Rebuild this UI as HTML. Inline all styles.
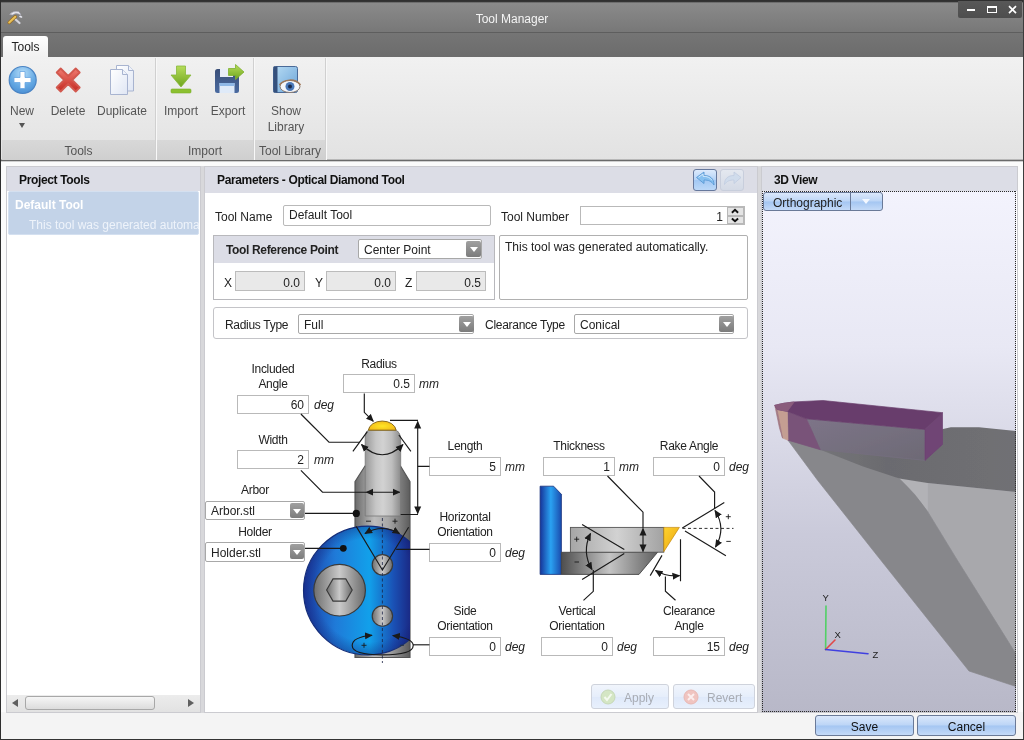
<!DOCTYPE html>
<html><head><meta charset="utf-8">
<style>
*{box-sizing:border-box;margin:0;padding:0}
html,body{width:1024px;height:740px;overflow:hidden}
body{font-family:"Liberation Sans",sans-serif;font-size:12px;color:#111;background:#f1f1f1;position:relative}
.abs{position:absolute}
#titlebar{left:0;top:0;width:1024px;height:33px;background:linear-gradient(#2e2e2e 0,#343434 1.500px,#8a8a8a 3px,#787878 31.500px,#5e5e5e 32.500px,#666 33px)}
#title{left:0;top:12px;width:1024px;text-align:center;color:#f4f4f4;font-size:12px}
#tabstrip{left:0;top:33px;width:1024px;height:24px;background:linear-gradient(#757575,#6c6c6c)}
#tab{left:3px;top:36px;width:45px;height:22px;background:linear-gradient(#fff,#f0f0f0);border-radius:3px 3px 0 0;text-align:center;font-size:12px;line-height:22px;color:#222}
#ribbon{left:0;top:57px;width:1024px;height:103px;background:linear-gradient(#f1f1f1,#e2e2e2)}
#ribbonline{left:0;top:159px;width:1024px;height:3px;background:linear-gradient(#b8b8b8 0,#b8b8b8 1px,#6a6a6a 1px,#6a6a6a 2px,#cfcfcf 2px)}
.grpfoot{top:140px;height:20px;background:linear-gradient(#d8d8d8,#cfcfcf);text-align:center;font-size:12px;line-height:22px;color:#555}
.rlabel{font-size:12px;color:#555;text-align:center}
.sep{top:58px;width:1px;height:102px;background:#d0d0d0}
#main{left:0;top:162px;width:1024px;height:576px;background:#f4f4f4}
.panel{background:#fff;border:1px solid #cbcbd0}
.phead{background:#dcdde6;font-weight:bold;letter-spacing:-0.35px;font-size:12px;line-height:26px;height:24px;padding-left:12px;overflow:hidden;color:#111}
.inp{background:#fff;border:1px solid #b9b9b9;height:20px;font-size:12px;line-height:18px;padding-top:1.500px;overflow:hidden;text-align:right;padding-right:4px;color:#222}
.lbl{font-size:12px;color:#222;white-space:nowrap;margin-top:1px}
.unit{font-size:12px;font-style:italic;color:#222;margin-top:0}
.c{text-align:center;letter-spacing:-0.3px}

.ro{background:#e9e9e9;border-color:#bcbcbc}
.combo{border-radius:2px;border-color:#a8a8a8;padding-top:0.700px}
.dd{width:15px;height:16px;background:linear-gradient(#a0a0a0,#7c7c7c);border-radius:2px}
.dd:after{content:"";position:absolute;left:50%;top:50%;margin:-2px 0 0 -4px;border-left:4px solid transparent;border-right:4px solid transparent;border-top:5px solid #fff}
.btn{border:1px solid #6a7a98;border-radius:3px;background:linear-gradient(#dbe8fb,#bcd5f6 48%,#a4c6f2 52%,#c4daf8);text-align:center;font-size:12px;line-height:22.500px;color:#111;overflow:hidden}
.btnd{border:1px solid #cfd3dc;border-radius:3px;background:linear-gradient(#f1f5fc,#e6eefb 50%,#dfe9fa 52%,#e8f0fc)}
#wrap{position:absolute;left:0;top:0;width:1024px;height:740px;will-change:transform}
</style></head><body><div id="wrap">
<div class="abs" id="titlebar"></div>
<div class="abs" id="title">Tool Manager</div>
<div class="abs" id="tabstrip"></div>
<div class="abs" id="tab">Tools</div>
<div class="abs" id="ribbon"></div>
<div class="abs" id="ribbonline"></div>
<div class="abs" id="main"></div>
<svg class="abs" style="left:5px;top:7px" width="20" height="20" viewBox="5 7 20 20">
<path d="M9.500 14.500Q13 10.500 18.500 11.500Q20.500 13 21 15.500L18.500 14Q15.500 12.500 12.500 15z" fill="#e6e6ee" stroke="#9a9aa6" stroke-width="0.600"/>
<path d="M14.500 18.500L19.500 23" stroke="#d4d4dc" stroke-width="2.200" stroke-linecap="round"/>
<path d="M20 16.500l1.500 0.500" stroke="#e8e8f0" stroke-width="1.600" stroke-linecap="round"/>
<path d="M9.200 22.500L15.300 16.800" stroke="#9a6a20" stroke-width="3.400" stroke-linecap="round"/>
<path d="M9.200 22.500L15.300 16.800" stroke="#e8c25a" stroke-width="2" stroke-linecap="round"/>
</svg>
<!--RIBBON-S-->
<div class="abs grpfoot" style="left:2px;width:153px">Tools</div>
<div class="abs grpfoot" style="left:157px;width:96px">Import</div>
<div class="abs grpfoot" style="left:255px;width:70px">Tool Library</div>
<div class="abs sep" style="left:155px"></div><div class="abs" style="left:156px;top:58px;width:1px;height:102px;background:#f8f8f8"></div>
<div class="abs sep" style="left:253px"></div><div class="abs" style="left:254px;top:58px;width:1px;height:102px;background:#f8f8f8"></div>
<div class="abs sep" style="left:325px"></div><div class="abs" style="left:326px;top:58px;width:1px;height:102px;background:#f8f8f8"></div>
<div class="abs rlabel" style="left:2px;top:104px;width:40px">New</div>
<div class="abs" style="left:19px;top:123px;width:0;height:0;border-left:3.5px solid transparent;border-right:3.5px solid transparent;border-top:5px solid #555"></div>
<div class="abs rlabel" style="left:43px;top:104px;width:50px">Delete</div>
<div class="abs rlabel" style="left:92px;top:104px;width:60px">Duplicate</div>
<div class="abs rlabel" style="left:156px;top:104px;width:50px">Import</div>
<div class="abs rlabel" style="left:203px;top:104px;width:50px">Export</div>
<div class="abs rlabel" style="left:256px;top:102.500px;width:60px;line-height:16.300px">Show<br>Library</div>
<svg class="abs" style="left:0;top:57px" width="330" height="50" viewBox="0 57 330 50">
<defs>
<radialGradient id="gNew" cx="0.5" cy="0.25" r="0.85"><stop offset="0" stop-color="#b4dcf8"/><stop offset="0.55" stop-color="#66aae4"/><stop offset="1" stop-color="#4488d0"/></radialGradient>
<linearGradient id="gRed" x1="0" y1="0" x2="0" y2="1"><stop offset="0" stop-color="#f07a70"/><stop offset="1" stop-color="#c42a22"/></linearGradient>
<linearGradient id="gGreen" x1="0" y1="0" x2="0" y2="1"><stop offset="0" stop-color="#b6dc5a"/><stop offset="1" stop-color="#6ea51e"/></linearGradient>
<linearGradient id="gPage" x1="0" y1="0" x2="1" y2="1"><stop offset="0" stop-color="#ffffff"/><stop offset="1" stop-color="#dfe6f4"/></linearGradient>
<linearGradient id="gFloppy" x1="0" y1="0" x2="0" y2="1"><stop offset="0" stop-color="#3a4f78"/><stop offset="1" stop-color="#4a6aa0"/></linearGradient>
<linearGradient id="gBook" x1="0" y1="0" x2="1" y2="1"><stop offset="0" stop-color="#b8dcf4"/><stop offset="1" stop-color="#6aa4d8"/></linearGradient>
</defs>
<!-- New -->
<circle cx="22.700" cy="80" r="13.500" fill="url(#gNew)" stroke="#4a84c4" stroke-width="1.200"/>
<path d="M20 71.5h5v6h6v5h-6v6h-5v-6h-6v-5h6z" fill="#fff" stroke="#6aa6e2" stroke-width="0.8"/>
<!-- Delete -->
<path d="M56.700 72.500l4-4 7.500 7.500 7.500-7.500 4 4-7.500 7.500 7.500 7.500-4 4-7.500-7.500-7.500 7.500-4-4 7.500-7.500z" fill="url(#gRed)" stroke="#d2584e" stroke-width="1.800" stroke-linejoin="round"/>
<!-- Duplicate -->
<path d="M116.500 65.500h12l5 5v20.500h-17z" fill="url(#gPage)" stroke="#a8b4d0" stroke-width="1"/>
<path d="M128.500 65.500v5h5" fill="#eef2fa" stroke="#a8b4d0" stroke-width="1"/>
<path d="M110.500 69.500h12l5 5v20h-17z" fill="url(#gPage)" stroke="#a8b4d0" stroke-width="1"/>
<path d="M122.500 69.500v5h5" fill="#eef2fa" stroke="#a8b4d0" stroke-width="1"/>
<!-- Import -->
<path d="M176.500 66h9v9h5.500l-10 12-10-12h5.500z" fill="url(#gGreen)" stroke="#86b83a" stroke-width="0.8"/>
<rect x="171" y="89" width="20" height="4" rx="1" fill="#8cc030" stroke="#7aae2a" stroke-width="0.6"/>
<!-- Export -->
<rect x="215" y="69" width="24" height="24" rx="2.500" fill="url(#gFloppy)"/>
<rect x="220" y="69" width="13" height="8" fill="#e8eef8"/>
<rect x="219.500" y="83" width="15" height="10" fill="#dfeaf8"/>
<rect x="219.500" y="83" width="15" height="3" fill="#8fb8e6"/>
<path d="M228.500 68.500h7v-4l8.500 7.500-8.500 7.500v-4h-7z" fill="url(#gGreen)" stroke="#7fb030" stroke-width="0.8"/>
<!-- Book -->
<rect x="273.500" y="66.500" width="24" height="26" rx="2" fill="url(#gBook)" stroke="#4a6a98" stroke-width="1"/>
<rect x="273.500" y="66.500" width="4" height="26" fill="#35507c"/>
<ellipse cx="290" cy="86.500" rx="10" ry="6" fill="#f4f6fa" stroke="#8a7a70" stroke-width="1"/>
<circle cx="290" cy="86.500" r="4.500" fill="#4a78b8"/>
<circle cx="290" cy="86.500" r="2" fill="#1a2a4a"/>
<path d="M279.500 85c4-6 16-7 21 0" fill="none" stroke="#a07858" stroke-width="1.500"/>
</svg>
<!--RIBBON-E-->
<!--LEFT-S-->
<div class="abs" style="left:1px;top:162px;width:1022px;height:550px;background:#fbfbfb"></div>
<div class="abs" style="left:0;top:713px;width:1024px;height:27px;background:#f4f4f4"></div>
<div class="abs" style="left:200px;top:166px;width:5px;height:547px;background:#d8d8db"></div><div class="abs" style="left:757px;top:166px;width:5px;height:547px;background:#d8d8db"></div><div class="abs panel" style="left:6px;top:166px;width:195px;height:547px"></div>
<div class="abs phead" style="left:7px;top:167px;width:193px">Project Tools</div>
<div class="abs" style="left:8px;top:191px;width:191px;height:44px;background:#c3d3e8;border:1px solid #d4e0f0;border-radius:2px"></div>
<div class="abs" style="left:15px;top:198px;font-weight:bold;letter-spacing:0;color:#fff;font-size:12px">Default Tool</div>
<div class="abs" style="left:29px;top:218px;width:170px;overflow:hidden;white-space:nowrap;color:#eef3fa;font-size:12px">This tool was generated automatically.</div>
<div class="abs" style="left:7px;top:695px;width:193px;height:17px;background:linear-gradient(#ececec,#e2e2e2)"></div>
<div class="abs" style="left:25px;top:696px;width:130px;height:14px;border:1px solid #a8a8a8;border-radius:3px;background:linear-gradient(#f6f6f6,#dcdcdc)"></div>
<div class="abs" style="left:12px;top:699px;width:0;height:0;border-top:4px solid transparent;border-bottom:4px solid transparent;border-right:6px solid #606060"></div>
<div class="abs" style="left:188px;top:699px;width:0;height:0;border-top:4px solid transparent;border-bottom:4px solid transparent;border-left:6px solid #606060"></div>
<!--LEFT-E-->
<!--CENTER-S-->
<div class="abs panel" style="left:204px;top:166px;width:554px;height:547px"></div>
<div class="abs phead" style="left:205px;top:167px;width:552px;height:25.500px">Parameters - Optical Diamond Tool</div>
<!-- undo/redo -->
<div class="abs" style="left:693px;top:168.500px;width:24px;height:22px;border:1px solid #66789c;border-radius:3px;background:linear-gradient(#dceafc,#b4d2f6 50%,#a2c8f4 51%,#bcd8f8)"></div>
<div class="abs" style="left:719.500px;top:168.500px;width:24px;height:22px;border:1px solid #c8cedc;border-radius:3px;background:linear-gradient(#e4e8f0,#d4dae6)"></div>
<svg class="abs" style="left:693px;top:168px" width="52" height="22" viewBox="0 0 52 22">
<path d="M3.500 9.500l7.500-5.500v3.500c6 0 10 3 10 9.500-2.500-4-5.500-5-10-5v3.500z" fill="#86c0f0" stroke="#5a98d4" stroke-width="0.900"/><path d="M5.500 9.300l4.500-3.300v2.300c4 0 7 1 9 4" fill="none" stroke="#d8ecfc" stroke-width="0.900"/>
<path d="M48 9.500l-7-5.500v3.500c-6 0-9.500 3-9.500 9 2.500-3.500 5-4.500 9.500-4.500v3.500z" fill="#d0dcec" stroke="#c0cce0" stroke-width="0.800"/>
</svg>
<!-- row 1 -->
<div class="abs lbl" style="left:215px;top:209px">Tool Name</div>
<div class="abs inp" style="left:283px;top:205px;width:208px;height:21px;text-align:left;padding-left:5px;border-radius:2px;line-height:19px;line-height:17px;padding-top:1px">Default Tool</div>
<div class="abs lbl" style="left:501px;top:209px">Tool Number</div>
<div class="abs inp" style="left:580px;top:206px;width:165px;height:19px;padding-right:21px;line-height:17px">1</div>
<div class="abs" style="left:727px;top:207px;width:17px;height:9px;background:#e4e4e4;border:1px solid #b8b8b8"></div>
<div class="abs" style="left:727px;top:216px;width:17px;height:8px;background:#e4e4e4;border:1px solid #b8b8b8"></div>
<svg class="abs" style="left:727px;top:206px" width="18" height="19" viewBox="0 0 18 19"><path d="M4.900 6.700L8 3.900L11.100 6.700M4.900 12.500L8 15.300L11.100 12.500" fill="none" stroke="#111" stroke-width="1.900" stroke-linejoin="miter"/></svg>
<!-- ref point box -->
<div class="abs" style="left:213px;top:235px;width:282px;height:65px;border:1px solid #b8b8bc;background:#fff"></div>
<div class="abs" style="left:214px;top:236px;width:280px;height:27px;background:#dcdde6"></div>
<div class="abs lbl" style="left:226px;top:242px;font-weight:bold;letter-spacing:-0.35px">Tool Reference Point</div>
<div class="abs inp combo" style="left:358px;top:239px;width:124px;height:20px;text-align:left;padding-left:5px">Center Point</div>
<div class="abs dd" style="left:466px;top:241px"></div>
<div class="abs lbl" style="left:224px;top:275px">X</div>
<div class="abs inp ro" style="left:235px;top:271px;width:70px">0.0</div>
<div class="abs lbl" style="left:315px;top:275px">Y</div>
<div class="abs inp ro" style="left:326px;top:271px;width:70px">0.0</div>
<div class="abs lbl" style="left:405px;top:275px">Z</div>
<div class="abs inp ro" style="left:416px;top:271px;width:70px">0.5</div>
<!-- description -->
<div class="abs" style="left:499px;top:235px;width:249px;height:65px;border:1px solid #b0b0b0;border-radius:2px;background:#fff"></div>
<div class="abs lbl" style="left:505px;top:239px">This tool was generated automatically.</div>
<!-- radius type -->
<div class="abs" style="left:213px;top:307px;width:535px;height:32px;border:1px solid #c4c4c8;border-radius:3px;background:#fff"></div>
<div class="abs lbl" style="left:225px;top:317px;letter-spacing:-0.3px">Radius Type</div>
<div class="abs inp combo" style="left:298px;top:314px;width:176px;height:20px;text-align:left;padding-left:5px">Full</div>
<div class="abs dd" style="left:459px;top:316px"></div>
<div class="abs lbl" style="left:485px;top:317px;letter-spacing:-0.28px">Clearance Type</div>
<div class="abs inp combo" style="left:574px;top:314px;width:160px;height:20px;text-align:left;padding-left:5px">Conical</div>
<div class="abs dd" style="left:719px;top:316px"></div>
<!-- diagram fields -->
<div class="abs lbl c" style="left:233px;top:361px;width:80px;line-height:15px">Included<br>Angle</div>
<div class="abs inp" style="left:237px;top:395px;width:72px;height:19px;line-height:17px;padding-top:1px">60</div><div class="abs unit" style="left:314px;top:398px">deg</div>
<div class="abs lbl c" style="left:339px;top:356px;width:80px">Radius</div>
<div class="abs inp" style="left:343px;top:374px;width:72px;height:19px;line-height:17px;padding-top:1px">0.5</div><div class="abs unit" style="left:419px;top:377px">mm</div>
<div class="abs lbl c" style="left:233px;top:432px;width:80px">Width</div>
<div class="abs inp" style="left:237px;top:450px;width:72px;height:19px;line-height:17px;padding-top:1px">2</div><div class="abs unit" style="left:314px;top:453px">mm</div>
<div class="abs lbl c" style="left:215px;top:482px;width:80px">Arbor</div>
<div class="abs inp combo" style="left:205px;top:500.500px;width:100px;height:19.500px;text-align:left;padding-left:5px">Arbor.stl</div>
<div class="abs dd" style="left:290px;top:503px;width:14px;height:15px"></div>
<div class="abs lbl c" style="left:215px;top:524px;width:80px">Holder</div>
<div class="abs inp combo" style="left:205px;top:542px;width:100px;height:20px;text-align:left;padding-left:5px">Holder.stl</div>
<div class="abs dd" style="left:290px;top:544px;width:14px;height:15px"></div>
<div class="abs lbl c" style="left:425px;top:438px;width:80px">Length</div>
<div class="abs inp" style="left:429px;top:457px;width:72px;height:19px;line-height:17px;padding-top:1px">5</div><div class="abs unit" style="left:505px;top:460px">mm</div>
<div class="abs lbl c" style="left:425px;top:509px;width:80px;line-height:15px">Horizontal<br>Orientation</div>
<div class="abs inp" style="left:429px;top:543px;width:72px;height:19px;line-height:17px;padding-top:1px">0</div><div class="abs unit" style="left:505px;top:546px">deg</div>
<div class="abs lbl c" style="left:425px;top:603px;width:80px;line-height:15px">Side<br>Orientation</div>
<div class="abs inp" style="left:429px;top:637px;width:72px;height:19px;line-height:17px;padding-top:1px">0</div><div class="abs unit" style="left:505px;top:640px">deg</div>
<div class="abs lbl c" style="left:539px;top:438px;width:80px">Thickness</div>
<div class="abs inp" style="left:543px;top:457px;width:72px;height:19px;line-height:17px;padding-top:1px">1</div><div class="abs unit" style="left:619px;top:460px">mm</div>
<div class="abs lbl c" style="left:649px;top:438px;width:80px">Rake Angle</div>
<div class="abs inp" style="left:653px;top:457px;width:72px;height:19px;line-height:17px;padding-top:1px">0</div><div class="abs unit" style="left:729px;top:460px">deg</div>
<div class="abs lbl c" style="left:537px;top:603px;width:80px;line-height:15px">Vertical<br>Orientation</div>
<div class="abs inp" style="left:541px;top:637px;width:72px;height:19px;line-height:17px;padding-top:1px">0</div><div class="abs unit" style="left:617px;top:640px">deg</div>
<div class="abs lbl c" style="left:649px;top:603px;width:80px;line-height:15px">Clearance<br>Angle</div>
<div class="abs inp" style="left:653px;top:637px;width:72px;height:19px;line-height:17px;padding-top:1px">15</div><div class="abs unit" style="left:729px;top:640px">deg</div>
<!--DIAG-S-->
<svg class="abs" style="left:204px;top:340px" width="553" height="340" viewBox="204 340 553 340">
<defs>
<linearGradient id="gArbor" x1="0" y1="0" x2="1" y2="0"><stop offset="0" stop-color="#6a6a6a"/><stop offset="0.35" stop-color="#bdbdbd"/><stop offset="0.6" stop-color="#a8a8a8"/><stop offset="1" stop-color="#5c5c5c"/></linearGradient>
<linearGradient id="gShank" x1="0" y1="0" x2="1" y2="0"><stop offset="0" stop-color="#989898"/><stop offset="0.3" stop-color="#c6c6c6"/><stop offset="0.5" stop-color="#d2d2d2"/><stop offset="0.75" stop-color="#bebebe"/><stop offset="1" stop-color="#8a8a8a"/></linearGradient>
<linearGradient id="gBlue" gradientUnits="userSpaceOnUse" x1="303" y1="0" x2="410" y2="0"><stop offset="0" stop-color="#1c3aa0"/><stop offset="0.3" stop-color="#1f7ad8"/><stop offset="0.62" stop-color="#12a0ea"/><stop offset="0.85" stop-color="#1a50b4"/><stop offset="1" stop-color="#1a2a86"/></linearGradient>
<linearGradient id="gBolt" x1="0" y1="0" x2="1" y2="0"><stop offset="0" stop-color="#6e6e6e"/><stop offset="0.5" stop-color="#c9c9c9"/><stop offset="1" stop-color="#6a6a6a"/></linearGradient>
<linearGradient id="gBlue2" x1="0" y1="0" x2="1" y2="0"><stop offset="0" stop-color="#16349a"/><stop offset="0.5" stop-color="#2aa2f2"/><stop offset="1" stop-color="#1a4cae"/></linearGradient>
<linearGradient id="gUp" x1="0" y1="0" x2="1" y2="0"><stop offset="0" stop-color="#a6a6a6"/><stop offset="0.5" stop-color="#d2d2d2"/><stop offset="1" stop-color="#a2a2a2"/></linearGradient>
<linearGradient id="gLow" x1="0" y1="0" x2="1" y2="0"><stop offset="0" stop-color="#4e4e4e"/><stop offset="0.5" stop-color="#c4c4c4"/><stop offset="1" stop-color="#606060"/></linearGradient>
<linearGradient id="gYel" x1="0" y1="0" x2="1" y2="1"><stop offset="0" stop-color="#ffd22e"/><stop offset="1" stop-color="#e8a410"/></linearGradient>
<marker id="ah" viewBox="0 0 10 10" refX="9" refY="5" markerWidth="7.800" markerHeight="7.800" orient="auto-start-reverse" markerUnits="userSpaceOnUse"><path d="M0 0.500L10 5L0 9.500z" fill="#1a1a1a"/></marker>
</defs>
<g stroke="#1a1a1a" stroke-width="1.150" fill="none">
<!-- arbor -->
<path d="M355 657.500V481.700L365 466H400.500L410 481.700V657.500z" fill="url(#gArbor)" stroke="#555"/>
<!-- shank -->
<path d="M365.200 516V437Q365.500 432 368.200 430.200H396.300Q399.500 432 400.700 437V516z" fill="url(#gShank)" stroke="#777" stroke-width="0.800"/>
<!-- tip -->
<radialGradient id="gTip" cx="0.5" cy="0.55" r="0.6"><stop offset="0" stop-color="#ffe626"/><stop offset="1" stop-color="#f2b618"/></radialGradient><path d="M368.400 430.200A13.900 10 0 0 1 396.100 430.200z" fill="url(#gTip)" stroke="#7a5c14" stroke-width="0.900"/>
<!-- blue holder -->
<clipPath id="cpH"><rect x="300" y="520" width="110" height="140"/></clipPath>
<circle cx="367.900" cy="590.500" r="64.400" fill="url(#gBlue)" stroke="#16307a" clip-path="url(#cpH)"/>
<radialGradient id="gRim" gradientUnits="userSpaceOnUse" cx="367.900" cy="590.500" r="64.400"><stop offset="0.800" stop-color="#101a6e" stop-opacity="0"/><stop offset="1" stop-color="#101a6e" stop-opacity="0.350"/></radialGradient><circle cx="367.900" cy="590.500" r="64.400" fill="url(#gRim)" stroke="none" clip-path="url(#cpH)"/><circle cx="339.600" cy="590.200" r="25.800" fill="url(#gBolt)" stroke="#3a3a3a"/>
<path d="M326.600 590l6.400-11.100h12.800l6.400 11.100-6.400 11.100h-12.800z" fill="url(#gBolt)" stroke="#3a3a3a"/>
<circle cx="382.400" cy="564.800" r="10.200" fill="url(#gBolt)" stroke="#3a3a3a"/>
<circle cx="382.400" cy="616" r="10.200" fill="url(#gBolt)" stroke="#3a3a3a"/>
<!-- centerline -->
<path d="M382.400 518V663" stroke-dasharray="3 2.500" stroke-width="0.800" stroke="#1a2244"/>
<!-- V -->
<path d="M356.200 526.400L382.400 570L408.600 527.200"/>
<path d="M365 533.500Q382.400 523.500 399.500 533.500" marker-start="url(#ah)" marker-end="url(#ah)"/>
<path d="M396.200 549.400H429.500"/>
<!-- -/+ -->
<path d="M366 521.200h5M392.500 521.200h5M395 518.700v5" stroke-width="0.900"/>
<!-- length dim -->
<path d="M390 420.300H418M400.700 514.500H418M417.700 466.400H429.500"/>
<path d="M417.700 421.500V513.500" marker-start="url(#ah)" marker-end="url(#ah)"/>
<!-- radius leader -->
<path d="M364.300 393.500V412.300L373.300 421.300" marker-end="url(#ah)"/>
<!-- included angle -->
<path d="M300.900 414L329 442.200H360"/>
<path d="M352.900 451.300L367.300 431.600M410.900 451.300L398.900 435"/>
<path d="M361.500 444.500Q382.300 465 403 444.500" marker-start="url(#ah)" marker-end="url(#ah)"/>
<!-- width -->
<path d="M300.900 470.300L322.500 492.200H366"/>
<path d="M366.200 492.200H399.700" marker-start="url(#ah)" marker-end="url(#ah)"/>
<!-- arbor/holder leaders -->
<path d="M305 513.300H356"/><circle cx="356.300" cy="513.400" r="3.600" fill="#111" stroke="none"/>
<path d="M305 548.300H343"/><circle cx="343.300" cy="548.300" r="3.400" fill="#111" stroke="none"/>
<!-- side orientation -->
<path d="M372 635.200Q352.200 637 352.200 645.500Q352.200 654.900 382.400 654.900Q413.200 654.900 413.200 645.500Q413.200 638.500 392.800 635.500" marker-start="url(#ah)" marker-end="url(#ah)"/>
<path d="M413 644.800H429.500"/>
<path d="M361.500 645.300h5M364 642.800v5" stroke-width="0.900"/><path d="M400 645.300h4" stroke-width="0.900" stroke="#234"/>
<!-- ===== right diagram ===== -->
<path d="M540.100 574.400V486.200H553.600L561.400 494.300V574.400z" fill="url(#gBlue2)" stroke="#16307a" stroke-width="0.800"/>
<path d="M561.400 552.300H657.600L639 574.400H561.400z" fill="url(#gLow)" stroke="#444" stroke-width="0.900"/>
<rect x="570.400" y="527.400" width="93.400" height="24.800" fill="url(#gUp)" stroke="#555" stroke-width="0.900"/>
<path d="M663.800 527.400H679.400L663.800 551.700z" fill="url(#gYel)" stroke="#c48a10" stroke-width="0.700"/>
<!-- thickness -->
<path d="M607.500 476L643 512.200V528"/>
<path d="M643 528.500V551.500" marker-start="url(#ah)" marker-end="url(#ah)"/>
<!-- rake -->
<path d="M699 476L714.600 492V509"/>
<path d="M682.300 528L724.300 502.600M685 531L725.900 555.800"/>
<path d="M682.500 528.400H733.500" stroke-dasharray="3 2.500" stroke-width="0.900"/>
<path d="M715 510.500Q726.500 528.500 715.500 547" marker-start="url(#ah)" marker-end="url(#ah)"/>
<path d="M725.800 516.700h5M728.300 514.200v5M726.300 541.400h4.500" stroke-width="0.900"/>
<!-- vertical orientation -->
<path d="M582.100 524.600L624.300 549.500M624.300 553.500L582.100 579.400"/>
<path d="M590.500 533.500Q581.500 552 592 569.500" marker-start="url(#ah)" marker-end="url(#ah)"/>
<path d="M574.200 539.200h5M576.700 536.700v5M574.500 562h4.500" stroke-width="0.900"/>
<path d="M593.300 570V591.300L583.500 600.300"/>
<!-- clearance -->
<path d="M680.500 539.200V581.200M662 555.400L650.200 575.600"/>
<path d="M655.500 570.500Q666 577 679.500 575.600" marker-start="url(#ah)" marker-end="url(#ah)"/>
<path d="M665.400 576.500V591.300L675.500 600.300"/>
</g>
</svg>
<!--DIAG-E-->
<!-- apply / revert -->
<div class="abs btnd" style="left:591px;top:684px;width:78px;height:25px"></div>
<div class="abs btnd" style="left:673px;top:684px;width:82px;height:25px"></div>
<div class="abs" style="left:624px;top:691px;color:#a8acb4;font-size:12px">Apply</div>
<div class="abs" style="left:707px;top:691px;color:#a8acb4;font-size:12px">Revert</div>
<svg class="abs" style="left:591px;top:684px" width="164" height="25" viewBox="0 0 164 25">
<circle cx="17" cy="13" r="7" fill="#d4e6c4" stroke="#c6d8b8"/>
<path d="M13.500 13l2.500 3 4.500-6" fill="none" stroke="#f4faf0" stroke-width="2"/>
<circle cx="100" cy="13" r="7" fill="#f0c4c0" stroke="#e8b8b4"/>
<path d="M97 10l6 6m0-6l-6 6" fill="none" stroke="#fbeeee" stroke-width="2"/>
</svg>
<!--CENTER-E-->
<!--RIGHT-S-->
<div class="abs panel" style="left:761px;top:166px;width:257px;height:547px"></div>
<div class="abs phead" style="left:762px;top:167px;width:255px">3D View</div>
<div class="abs" id="view3d" style="left:762px;top:191px;width:254px;height:521px;background:linear-gradient(#f3f3fd 0,#e8e8f4 30%,#cacada 66%,#b8b8c8 100%);overflow:hidden">
<!--SCENE-S-->
<svg style="position:absolute;left:0;top:0" width="254" height="521" viewBox="762 191 254 521">
<defs>
<linearGradient id="gFront" x1="0" y1="0" x2="1" y2="1"><stop offset="0" stop-color="#7d7488"/><stop offset="1" stop-color="#6d6a75"/></linearGradient>
<linearGradient id="gDark" x1="0" y1="0" x2="1" y2="0"><stop offset="0" stop-color="#77777b"/><stop offset="0.4" stop-color="#6b6b6f"/><stop offset="1" stop-color="#707074"/></linearGradient>
<filter id="soft"><feGaussianBlur stdDeviation="0.45"/></filter>
</defs>
<g filter="url(#soft)">
<!-- light right region -->
<path d="M899 478.500L927.600 483L1016 492V655L956 558L927.600 511.500z" fill="#a8a8ac" stroke="#a8a8ac" stroke-width="0.700" stroke-linejoin="round"/>
<path d="M899 478.500L927.600 483V511.500z" fill="#b2b2b6" stroke="#b2b2b6" stroke-width="0.700" stroke-linejoin="round"/>
<!-- band -->
<path d="M788 440.200L790 425L830 430L863 460L899.200 478.500Q915 493 927.600 511.500L956 558L1016 654V686.500L969 671L876.700 555L817.400 480z" fill="#87878b" stroke="#87878b" stroke-width="0.700" stroke-linejoin="round"/>
<!-- dark shank -->
<path d="M800 430L930 435L943 429L950.800 427.200H979L1016 431V492L927.600 483L899.200 478.500L863 466.400L820.200 449.700z" fill="url(#gDark)"/>
<path d="M788 440.200L820.200 449.700L925 460.400L863 466.400z" fill="#707074" stroke="#707074" stroke-width="0.700" stroke-linejoin="round" opacity="0.0"/>
<!-- tool -->
<path d="M806.500 418.800L925 429.500V460.400L820.200 449.700z" fill="url(#gFront)" stroke="#756f7f" stroke-width="0.700"/>
<path d="M925 429.500L942.500 412.700V444.400L925 460.400z" fill="#6f4474" stroke="#6f4474" stroke-width="0.700" stroke-linejoin="round"/>
<path d="M787.300 411.400L806.500 418.800L820.200 449.700L788 440.200z" fill="#795379" stroke="#795379" stroke-width="0.700" stroke-linejoin="round"/>
<path d="M777 409.400L787.300 411.400L788 440.200L782.600 438.100z" fill="#c49e92" stroke="#c49e92" stroke-width="0.700" stroke-linejoin="round"/>
<path d="M774.800 405.300L777 409.400L782.600 438.100L779.500 428z" fill="#a27882" stroke="#a27882" stroke-width="0.700" stroke-linejoin="round"/>
<path d="M774.800 405.300Q784 402.800 794.200 401.900L822.900 400.500L942.500 412.700L925 429.500L806.500 418.800L787.300 411.400L777 409.400z" fill="#683e6c" stroke="#683e6c" stroke-width="0.700" stroke-linejoin="round"/>
<path d="M774.800 405.300Q784 402.800 794.200 401.900L787.300 411.400L777 409.400z" fill="#8a5c7c" stroke="#8a5c7c" stroke-width="0.700" stroke-linejoin="round"/>
</g>
<!-- triad -->
<g stroke-width="1.600" fill="none" stroke-linecap="round">
<path d="M825.600 649.500L826 606" stroke="#52d066"/>
<path d="M825.600 649.500L835 640" stroke="#e04848"/>
<path d="M825.600 649.500L868 653.700" stroke="#4040e0"/>
</g>
<g font-family="Liberation Sans, sans-serif" font-size="9.500" fill="#222" text-anchor="middle">
<text x="825.700" y="601">Y</text><text x="837.700" y="638">X</text><text x="875.500" y="657.500">Z</text>
</g>
</svg>
<!--SCENE-E-->
</div>
<div class="abs" style="left:762px;top:191px;width:254px;height:1px;background:repeating-linear-gradient(90deg,#2a2a2a 0 1px,rgba(0,0,0,0.05) 1px 2px)"></div><div class="abs" style="left:762px;top:711px;width:254px;height:1px;background:repeating-linear-gradient(90deg,#2a2a2a 0 1px,rgba(0,0,0,0.05) 1px 2px)"></div><div class="abs" style="left:762px;top:191px;width:1px;height:521px;background:repeating-linear-gradient(180deg,#2a2a2a 0 1px,rgba(0,0,0,0.05) 1px 2px)"></div><div class="abs" style="left:1015px;top:191px;width:1px;height:521px;background:repeating-linear-gradient(180deg,#2a2a2a 0 1px,rgba(0,0,0,0.05) 1px 2px)"></div>
<div class="abs" style="left:763px;top:192px;width:120px;height:19px;border:1px solid #6a7a98;border-radius:3px;background:linear-gradient(#dbe8fb,#bcd5f6 48%,#a4c6f2 52%,#c4daf8)"></div>
<div class="abs" style="left:850px;top:193px;width:1px;height:17px;background:#6a7a98"></div>
<div class="abs lbl" style="left:773px;top:195px">Orthographic</div>
<div class="abs" style="left:862px;top:199px;width:0;height:0;border-left:4px solid transparent;border-right:4px solid transparent;border-top:5px solid #f4f8ff"></div>
<!--RIGHT-E-->
<!--BOTTOM-S-->
<div class="abs btn" style="left:815px;top:715px;width:99px;height:21px">Save</div>
<div class="abs btn" style="left:917px;top:715px;width:99px;height:21px">Cancel</div>
<div class="abs" style="left:0;top:0;width:1px;height:740px;background:#2e2e2e"></div>
<div class="abs" style="left:1022.600px;top:0;width:1.400px;height:740px;background:#3c3c3c"></div>
<div class="abs" style="left:0;top:738.700px;width:1024px;height:1.300px;background:#333"></div>
<!-- window buttons -->
<div class="abs" style="left:958px;top:1px;width:64px;height:17px;background:linear-gradient(#585858,#4e4e4e);border-radius:0 0 2px 2px"></div>
<div class="abs" style="left:967px;top:8.500px;width:7.500px;height:2.500px;background:#fff"></div>
<div class="abs" style="left:986.500px;top:6px;width:10px;height:7px;border:1px solid #fff;border-top-width:2px"></div>
<svg class="abs" style="left:1008px;top:5px" width="9" height="9" viewBox="0 0 9 9"><path d="M1 1.200l7 7m0-7l-7 7" stroke="#fff" stroke-width="1.700" fill="none"/></svg>
<!--BOTTOM-E-->
</div></body></html>
